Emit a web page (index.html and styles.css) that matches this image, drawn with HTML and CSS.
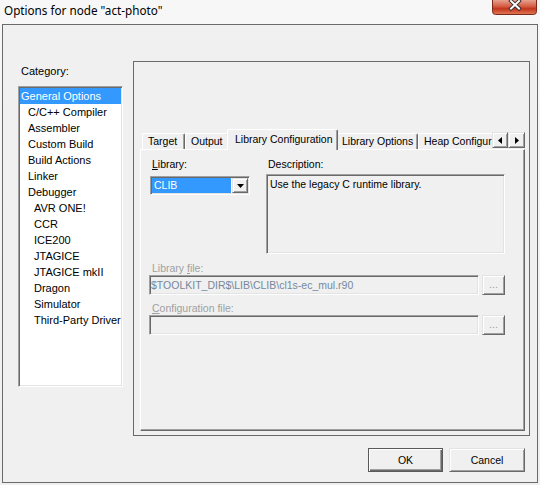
FILE: index.html
```html
<!DOCTYPE html>
<html>
<head>
<meta charset="utf-8">
<link rel="stylesheet" href="styles.css">
</head>
<body>
<div class="titlebar">
  <span class="title">Options for node "act-photo"</span>
  <span class="close">
    <svg width="45" height="15" viewBox="0 0 45 15">
      <defs>
        <linearGradient id="cg" x1="0" y1="0" x2="0" y2="1">
          <stop offset="0" stop-color="#e6a290"/>
          <stop offset="0.45" stop-color="#d45a40"/>
          <stop offset="0.6" stop-color="#c2361d"/>
          <stop offset="1" stop-color="#e27a58"/>
        </linearGradient>
      </defs>
      <path d="M0.5 0 V11.5 Q0.5 14.5 3.5 14.5 H41.5 Q44.5 14.5 44.5 11.5 V0" fill="url(#cg)" stroke="#7a2a1c"/>
      <path d="M19 1 L27 8.5 M27 1 L19 8.5" stroke="#3b2b2b" stroke-width="3.8" stroke-linecap="square"/>
      <path d="M19 1 L27 8.5 M27 1 L19 8.5" stroke="#ffffff" stroke-width="2" stroke-linecap="square"/>
    </svg>
  </span>
</div>
<div class="frame">
  <div class="left">
    <div class="cat-label">Category:</div>
    <ul class="list">
      <li class="sel l0">General Options</li>
      <li class="l1">C/C++ Compiler</li>
      <li class="l1">Assembler</li>
      <li class="l1">Custom Build</li>
      <li class="l1">Build Actions</li>
      <li class="l1">Linker</li>
      <li class="l1">Debugger</li>
      <li class="l2">AVR ONE!</li>
      <li class="l2">CCR</li>
      <li class="l2">ICE200</li>
      <li class="l2">JTAGICE</li>
      <li class="l2">JTAGICE mkII</li>
      <li class="l2">Dragon</li>
      <li class="l2">Simulator</li>
      <li class="l2">Third-Party Driver</li>
    </ul>
  </div>
  <div class="group">
    <div class="tabstrip">
      <div class="tabs">
        <div class="tab t-target">Target</div>
        <div class="tab t-output">Output</div>
        <div class="tab sel t-libconf">Library Configuration</div>
        <div class="tab t-libopt">Library Options</div>
        <div class="tab t-heap">Heap Configuration</div>
      </div>
      <div class="spin">
        <span class="sbtn raised s1"><svg width="4" height="7" viewBox="0 0 4 7"><path d="M4 0V7L0 3.5Z"/></svg></span>
        <span class="sbtn raised s2"><svg width="4" height="7" viewBox="0 0 4 7"><path d="M0 0V7L4 3.5Z"/></svg></span>
      </div>
    </div>
    <div class="tabpanel">
      <div class="toprow">
        <div class="col-lib">
          <div class="lbl"><u>L</u>ibrary:</div>
          <div class="combo sunken">
            <span class="combo-val">CLIB</span>
            <span class="combo-btn raised"><svg width="7" height="4" viewBox="0 0 7 4"><path d="M0 0H7L3.5 4Z"/></svg></span>
          </div>
        </div>
        <div class="col-desc">
          <div class="lbl">Description:</div>
          <div class="descbox sunken">Use the legacy C runtime library.</div>
        </div>
      </div>
      <div class="lbl dis lbl-file">Library <u>f</u>ile:</div>
      <div class="filerow">
        <div class="field sunken">$TOOLKIT_DIR$\LIB\CLIB\cl1s-ec_mul.r90</div>
        <div class="browse raised">...</div>
      </div>
      <div class="lbl dis lbl-conf"><u>C</u>onfiguration file:</div>
      <div class="filerow">
        <div class="field sunken"></div>
        <div class="browse raised">...</div>
      </div>
    </div>
  </div>
  <div class="buttons">
    <div class="btn default">OK</div>
    <div class="btn raised cancel">Cancel</div>
  </div>
</div>
</body>
</html>
```
FILE: styles.css
```css
html, body {
  margin: 0;
  padding: 0;
}
body {
  width: 540px;
  height: 485px;
  overflow: hidden;
  background: linear-gradient(#f7f7f7, #efefef);
  font-family: "Liberation Sans", Arial, sans-serif;
  font-size: 10.5px;
  color: #000;
}
.titlebar {
  display: flex;
  justify-content: space-between;
  align-items: flex-start;
  height: 24px;
}
.title {
  font-family: "Noto Sans", "Open Sans", sans-serif;
  font-size: 11.7px;
  line-height: 16px;
  padding: 2px 0 0 4px;
}
.close {
  display: block;
  width: 45px;
  height: 15px;
  margin-right: 3px;
}
.close svg {
  display: block;
}
.frame {
  margin-left: 2px;
  width: 536px;
  height: 459px;
  box-sizing: border-box;
  border: 1px solid #6a6a6a;
  background: #f0f0f0;
  display: grid;
  grid-template-columns: 105px 397px;
  grid-template-rows: 375px 24px;
  column-gap: 10px;
  row-gap: 12px;
  padding: 36px 7px 10px 15px;
}
.sunken {
  box-sizing: border-box;
  border: 1px solid;
  border-color: #a0a0a0 #ffffff #ffffff #a0a0a0;
  box-shadow: inset 1px 1px 0 #696969, inset -1px -1px 0 #e3e3e3;
}
.raised {
  box-sizing: border-box;
  background: #f0f0f0;
  border: 1px solid;
  border-color: #e3e3e3 #696969 #696969 #e3e3e3;
  box-shadow: inset 1px 1px 0 #ffffff, inset -1px -1px 0 #a0a0a0;
}
.cat-label {
  margin-top: 4px;
  padding-left: 3px;
  line-height: 13px;
  font-size: 11px;
}
.list {
  list-style: none;
  margin: 8px 0 0 0;
  padding: 0 1px 1px 1px;
  width: 105px;
  height: 301px;
  box-sizing: border-box;
  background: #fff;
  border: 1px solid;
  border-color: #a0a0a0 #ffffff #ffffff #a0a0a0;
  box-shadow: inset 1px 1px 0 #696969, inset -1px -1px 0 #e3e3e3;
  font-size: 11px;
}
.list li {
  height: 16px;
  line-height: 16px;
  white-space: nowrap;
}
.list .l0 { padding-left: 1px; }
.list .l1 { padding-left: 8px; }
.list .l2 { padding-left: 14px; }
.list .sel {
  margin-top: 1px;
  background: #3399ff;
  color: #fff;
}
.group {
  box-sizing: border-box;
  border: 1px solid #6a6a6a;
  padding: 67px 4px 4px 6px;
  display: flex;
  flex-direction: column;
}
.tabstrip {
  display: flex;
  height: 21px;
}
.tabs {
  flex: 1;
  display: flex;
  align-items: flex-end;
  overflow: hidden;
  padding-left: 2px;
}
.tab {
  flex: none;
  box-sizing: border-box;
  height: 16px;
  margin-bottom: 1px;
  border-top: 1px solid #fff;
  border-left: 1px solid #fff;
  border-right: 1px solid #696969;
  box-shadow: inset -1px 0 0 #a0a0a0;
  border-radius: 2px 2px 0 0;
  background: #f0f0f0;
  line-height: 15px;
  font-size: 10.5px;
  padding-left: 5px;
  white-space: nowrap;
  overflow: hidden;
}
.t-target { width: 43px; }
.t-output { width: 44px; }
.t-libconf { width: 111px; }
.t-libopt { width: 82px; }
.t-heap { width: 82px; }
.tab.sel {
  height: 21px;
  margin: 0 -2px;
  position: relative;
  z-index: 2;
  line-height: 18px;
  padding-left: 7px;
}
.spin {
  display: flex;
  margin-top: 3px;
  height: 16px;
}
.sbtn {
  display: flex;
  align-items: center;
  justify-content: center;
  height: 16px;
}
.s1 { width: 16px; }
.s2 { width: 17px; }
.sbtn svg, .combo-btn svg {
  display: block;
  fill: #000;
}
.tabpanel {
  box-sizing: border-box;
  height: 282px;
  margin-top: -1px;
  border-top: 1px solid #fff;
  border-left: 1px solid #fff;
  border-right: 1px solid #696969;
  border-bottom: 1px solid #696969;
  box-shadow: inset -1px -1px 0 #a0a0a0;
  padding: 8px 0 0 9px;
}
.toprow {
  display: flex;
  gap: 16px;
}
.col-lib { width: 100px; }
.col-desc { width: 239px; }
.lbl {
  line-height: 13px;
  padding-left: 2px;
  white-space: nowrap;
}
.combo {
  margin-top: 5px;
  width: 100px;
  height: 19px;
  display: flex;
  padding: 1px;
  background: #fff;
}
.combo-val {
  flex: 1;
  background: #3399ff;
  color: #fff;
  line-height: 15px;
  padding-left: 2px;
  margin-right: 1px;
}
.combo-btn {
  width: 16px;
  display: flex;
  align-items: center;
  justify-content: center;
}
.descbox {
  margin-top: 3px;
  height: 80px;
  padding: 3px 3px;
  line-height: 13px;
  background: #f0f0f0;
}
.dis { color: #a0a0a0; }
.lbl-file { margin-top: 8px; }
.lbl-conf { margin-top: 7px; }
.filerow {
  display: flex;
  gap: 3px;
  margin-left: -1px;
  height: 20px;
}
.field {
  width: 330px;
  height: 20px;
  padding-left: 1px;
  line-height: 18px;
  color: #76889c;
  white-space: nowrap;
  overflow: hidden;
}
.browse {
  width: 23px;
  height: 20px;
  color: #a0a0a0;
  text-align: center;
  line-height: 17px;
}
.buttons {
  grid-column: 1 / -1;
  display: flex;
  justify-content: flex-end;
  gap: 6px;
  margin-right: 5px;
}
.btn {
  box-sizing: border-box;
  height: 24px;
  text-align: center;
  line-height: 22px;
  font-size: 10.5px;
}
.btn.default {
  width: 75px;
  background: #f0f0f0;
  border: 1px solid #5a5a5a;
  box-shadow: inset 1px 1px 0 #ffffff, inset -1px -1px 0 #696969, inset -2px -2px 0 #a0a0a0;
}
.btn.cancel {
  width: 76px;
}
```
